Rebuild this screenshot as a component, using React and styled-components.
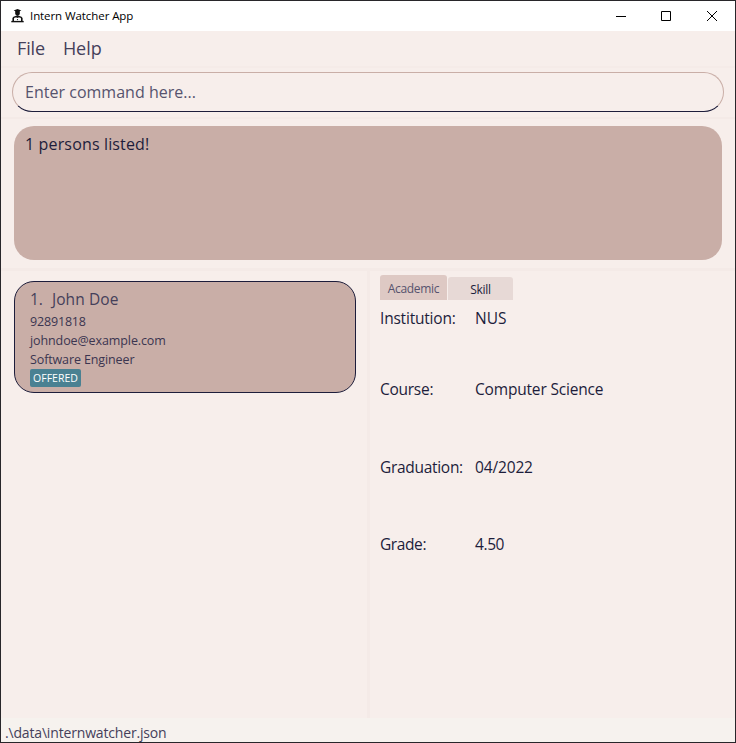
import React from 'react';
import styled, { createGlobalStyle } from 'styled-components';

const Global = createGlobalStyle`
  * { box-sizing: border-box; }
  html, body { margin: 0; padding: 0; }
  body { background: #28262a; font-family: 'Open Sans', 'Noto Sans', sans-serif; overflow: hidden; }
`;

const Window = styled.div`
  width: 736px;
  height: 743px;
  display: flex;
  flex-direction: column;
  border: 1px solid #28262a;
  background: #f7eeeb;
`;

const TitleBar = styled.header`
  height: 30px;
  flex: none;
  display: flex;
  align-items: center;
  background: #fff;
  padding-left: 10px;
`;

const Label = styled.span`
  white-space: pre;
  font-size: ${(p) => p.$size}px;
  line-height: ${(p) => p.$line || 20}px;
  letter-spacing: ${(p) => p.$track || 0}px;
  color: ${(p) => p.$color || '#1d1d3b'};
`;

const TitleText = styled(Label)`
  margin-left: 6px;
  flex: 1;
`;

const WindowButton = styled.button`
  width: ${(p) => p.$width || 46}px;
  height: 30px;
  border: 0;
  padding: 0;
  background: none;
  display: flex;
  align-items: center;
  justify-content: center;
`;

const MenuBar = styled.nav`
  height: 37px;
  flex: none;
  display: flex;
  align-items: center;
  gap: 18px;
  padding: 0 0 2px 16px;
  border-bottom: 2px solid #f5ebe8;
`;

const CommandPane = styled.section`
  height: 49px;
  flex: none;
  padding: 4px 11px 0;
`;

const CommandField = styled.div`
  height: 40px;
  border: 1px solid #c9aea7;
  border-bottom-color: #1d1d3b;
  border-radius: 20px;
  padding: 0 12px;
  display: flex;
  align-items: center;
`;

const ResultPane = styled.section`
  height: 151px;
  flex: none;
  border-top: 2px solid #f4eae7;
  padding: 7px 13px 0;
`;

const ResultBox = styled.div`
  height: 134px;
  border-radius: 20px;
  background: #c9aea7;
  padding: 8px 11px;
  display: flex;
`;

const Split = styled.main`
  flex: 1;
  display: flex;
  border-top: 3px solid #f4eae7;
`;

const ListPane = styled.section`
  width: 366px;
  flex: none;
  padding: 10px 11px 0 13px;
`;

const Divider = styled.div`
  width: 3px;
  flex: none;
  background: #f4eae7;
`;

const PersonCard = styled.article`
  height: 112px;
  border: 1px solid #1d1d3b;
  border-radius: 20px;
  background: #c9aea7;
  padding: 7px 15px 0;
  display: flex;
  flex-direction: column;
  align-items: flex-start;
`;

const NameRow = styled.div`
  display: flex;
  gap: 9px;
  height: 23px;
  flex: none;
`;

const StatusTag = styled.div`
  height: 18px;
  width: 51px;
  flex: none;
  border-radius: 2px;
  background: #4a8192;
  display: flex;
  align-items: center;
  justify-content: center;
`;

const DetailPane = styled.section`
  flex: 1;
  padding: 4px 0 0 10px;
`;

const TabStrip = styled.div`
  height: 25px;
  display: flex;
  align-items: flex-end;
  gap: 1px;
`;

const Tab = styled.div`
  width: ${(p) => (p.$active ? 67 : 65)}px;
  height: ${(p) => (p.$active ? 25 : 23)}px;
  background: ${(p) => (p.$active ? '#dec9c4' : '#e7d9d6')};
  border-radius: 3px 3px 0 0;
  display: flex;
  align-items: center;
  justify-content: center;
  padding-top: 2px;
`;

const Fields = styled.div`
  display: grid;
  grid-template-columns: 95px 1fr;
  grid-template-rows: 71px 78px 77px 40px;
  padding-top: 8px;
`;

const StatusBar = styled.footer`
  height: 24px;
  flex: none;
  background: #f6f2ee;
  padding: 6px 0 0 4px;
  display: flex;
`;

const AppIcon = () => (
  <svg width="13" height="14" viewBox="0 0 13 14">
    <path d="M2.600 1.400 6.500 0l3.900 1.400-3.900 1.500z" fill="#111" />
    <path d="M4.200 2h4.600v2.600a2.300 2.400 0 0 1-4.600 0z" fill="#111" />
    <path d="M2.200 12.500V9.300Q2.600 7.900 4.600 7.700h3.800q2 .2 2.400 1.600v3.200" fill="#fff" stroke="#111" strokeWidth="1.600" />
    <path d="M4.500 7h4L6.500 9z" fill="#111" />
    <path d="M.3 12.600h12.400" stroke="#111" strokeWidth="1.400" />
    <circle cx="6.500" cy="10.600" r=".6" fill="#111" />
  </svg>
);

const fields = [
  ['Institution:', -0.2, 'NUS', 0],
  ['Course:', -0.27, 'Computer Science', -0.18],
  ['Graduation:', -0.3, '04/2022', -0.15],
  ['Grade:', -0.4, '4.50', -0.4],
];

export default function App() {
  return (
    <>
      <Global />
      <Window>
        <TitleBar>
          <AppIcon />
          <TitleText $size={11.5} $track={-0.08} $color="#000">Intern Watcher App</TitleText>
          <WindowButton $width={44} aria-label="Minimize">
            <svg width="10" height="10"><path d="M0 5.500h10" stroke="#000" /></svg>
          </WindowButton>
          <WindowButton aria-label="Maximize">
            <svg width="10" height="10"><path d="M.5.5h9v9h-9z" fill="none" stroke="#000" /></svg>
          </WindowButton>
          <WindowButton aria-label="Close">
            <svg width="10" height="10"><path d="M0 0l10 10M10 0L0 10" stroke="#000" /></svg>
          </WindowButton>
        </TitleBar>
        <MenuBar>
          <Label $size={18} $track={-0.15} $color="#45405a">File</Label>
          <Label $size={18} $track={-0.05} $color="#45405a">Help</Label>
        </MenuBar>
        <CommandPane>
          <CommandField>
            <Label $size={16} $track={0.02} $color="#56536e">Enter command here...</Label>
          </CommandField>
        </CommandPane>
        <ResultPane>
          <ResultBox>
            <Label $size={16} $track={0.15}>1 persons listed!</Label>
          </ResultBox>
        </ResultPane>
        <Split>
          <ListPane>
            <PersonCard>
              <NameRow>
                <Label $size={15.5} $track={0} $color="#45405a">1.</Label>
                <Label $size={15.5} $track={0.1} $color="#45405a">John Doe</Label>
              </NameRow>
              <Label $size={12.5} $line={19} $track={-0.17} $color="#3b3550">92891818</Label>
              <Label $size={12.5} $line={19} $track={-0.1} $color="#3b3550">johndoe@example.com</Label>
              <Label $size={12.5} $line={19} $track={-0.12} $color="#3b3550">Software Engineer</Label>
              <StatusTag>
                <Label $size={10.5} $line={16} $track={0} $color="#fff">OFFERED</Label>
              </StatusTag>
            </PersonCard>
          </ListPane>
          <Divider />
          <DetailPane>
            <TabStrip>
              <Tab $active>
                <Label $size={12} $track={-0.3} $color="#56536e">Academic</Label>
              </Tab>
              <Tab>
                <Label $size={12} $track={-0.3}>Skill</Label>
              </Tab>
            </TabStrip>
            <Fields>
              {fields.map(([name, nameTrack, value, valueTrack]) => (
                <React.Fragment key={name}>
                  <Label $size={15.5} $track={nameTrack}>{name}</Label>
                  <Label $size={15.5} $track={valueTrack}>{value}</Label>
                </React.Fragment>
              ))}
            </Fields>
          </DetailPane>
        </Split>
        <StatusBar>
          <Label $size={14} $line={18} $track={-0.17} $color="#45405a">.\data\internwatcher.json</Label>
        </StatusBar>
      </Window>
    </>
  );
}
